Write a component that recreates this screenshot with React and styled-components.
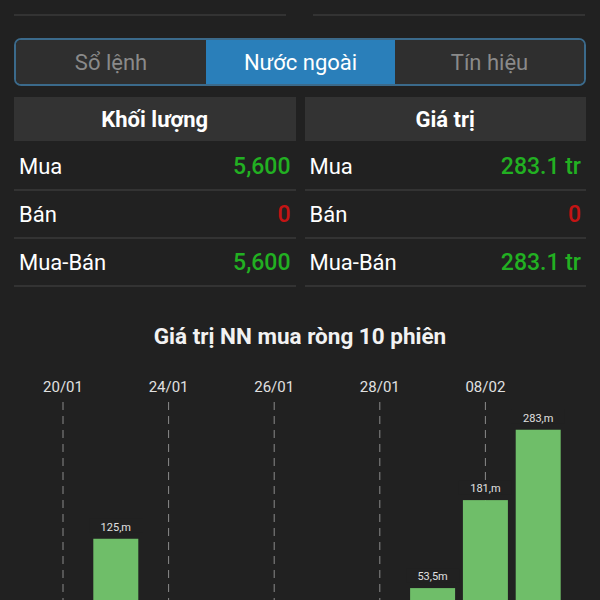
import React from "react";
import styled, { createGlobalStyle } from "styled-components";

const GlobalStyle = createGlobalStyle`
  html, body {
    margin: 0;
    background: #212121;
    font-family: Roboto, "Liberation Sans", sans-serif;
  }
`;

const tabs = ["Sổ lệnh", "Nước ngoài", "Tín hiệu"];

const tables = [
  {
    title: "Khối lượng",
    rows: [
      { label: "Mua", value: "5,600", tone: "up" },
      { label: "Bán", value: "0", tone: "down" },
      { label: "Mua-Bán", value: "5,600", tone: "up" },
    ],
  },
  {
    title: "Giá trị",
    rows: [
      { label: "Mua", value: "283.1 tr", tone: "up" },
      { label: "Bán", value: "0", tone: "down" },
      { label: "Mua-Bán", value: "283.1 tr", tone: "up" },
    ],
  },
];

const sessions = [
  { date: "20/01", value: 0 },
  { date: "", value: 125, text: "125,m" },
  { date: "24/01", value: 0 },
  { date: "", value: 0 },
  { date: "26/01", value: 0 },
  { date: "", value: 0 },
  { date: "28/01", value: 0 },
  { date: "", value: 53.5, text: "53,5m" },
  { date: "08/02", value: 181, text: "181,m" },
  { date: "", value: 283, text: "283,m" },
];

const Page = styled.div`
  padding: 0 14px;
  color: #fff;
`;

const TopFields = styled.div`
  display: grid;
  grid-template-columns: 1fr 1fr;
  gap: 27px;
  padding-right: 1px;
`;

const Field = styled.div`
  height: 14px;
  border-bottom: 2px solid #333;
`;

const TabBar = styled.div`
  margin-top: 22px;
  display: grid;
  grid-template-columns: 190px 189px 1fr;
  height: 48px;
  border: 2px solid #3b6a8b;
  border-radius: 7px;
  overflow: hidden;
  box-sizing: border-box;
`;

const Tab = styled.div`
  display: flex;
  align-items: center;
  justify-content: center;
  font-size: 22px;
  background: ${(p) => (p.$active ? "#2a7fba" : "#2f2f2f")};
  color: ${(p) => (p.$active ? "#fff" : "#8a8a8a")};
`;

const Tables = styled.div`
  margin-top: 11px;
  display: grid;
  grid-template-columns: 1fr 1fr;
  gap: 9px;
`;

const Header = styled.div`
  height: 44px;
  margin-bottom: 2px;
  background: #333;
  display: flex;
  align-items: center;
  justify-content: center;
  font-size: 22px;
  font-weight: 700;
`;

const Row = styled.div`
  height: 46px;
  border-bottom: 2px solid #333;
  display: flex;
  align-items: center;
  justify-content: space-between;
  padding: 0 5px 0 5px;
  font-size: 22px;
`;

const Value = styled.span`
  font-weight: 500;
  font-size: 23px;
  color: ${(p) => (p.$tone === "down" ? "#c41414" : "#22b022")};
`;

const Title = styled.h2`
  margin: 36px 0 0;
  text-align: center;
  font-size: 22.5px;
  font-weight: 700;
  color: #f2f2f2;
`;

const Chart = styled.svg`
  display: block;
  margin: 11px 0 0 -14px;
`;

const BASE = 265;
const SCALE = 0.69;

function BarChart() {
  return (
    <Chart width="600" height="270" viewBox="0 0 600 270">
      {sessions.map((s, i) => {
        const cx = 63 + 52.8 * i;
        return s.date ? (
          <g key={"d" + i}>
            <text x={cx} y="32" fill="#e0e0e0" fontSize="15" textAnchor="middle" fontFamily="Roboto, sans-serif">
              {s.date}
            </text>
            <line x1={cx} y1="42" x2={cx} y2="270" stroke="#8a8a8a" strokeWidth="1" strokeDasharray="8 6" />
          </g>
        ) : null;
      })}
      {sessions.map((s, i) => {
        if (!s.value) return null;
        const x = 40.5 + 52.8 * i;
        const h = s.value * SCALE;
        return (
          <g key={"b" + i}>
            <rect x={x - 4} y={BASE - h - 20} width="53" height="14" fill="#212121" />
            <text x={x + 22.5} y={BASE - h - 8} fill="#e0e0e0" fontSize="11" textAnchor="middle" fontFamily="Roboto, sans-serif">
              {s.text}
            </text>
            <rect x={x} y={BASE - h} width="45" height={h} fill="#6fbe69" />
          </g>
        );
      })}
    </Chart>
  );
}

export default function App() {
  return (
    <Page>
      <GlobalStyle />
      <TopFields>
        <Field />
        <Field />
      </TopFields>
      <TabBar>
        {tabs.map((t, i) => (
          <Tab key={t} $active={i === 1}>
            {t}
          </Tab>
        ))}
      </TabBar>
      <Tables>
        {tables.map((tb) => (
          <div key={tb.title}>
            <Header>{tb.title}</Header>
            {tb.rows.map((r) => (
              <Row key={r.label}>
                <span>{r.label}</span>
                <Value $tone={r.tone}>{r.value}</Value>
              </Row>
            ))}
          </div>
        ))}
      </Tables>
      <Title>Giá trị NN mua ròng 10 phiên</Title>
      <BarChart />
    </Page>
  );
}
